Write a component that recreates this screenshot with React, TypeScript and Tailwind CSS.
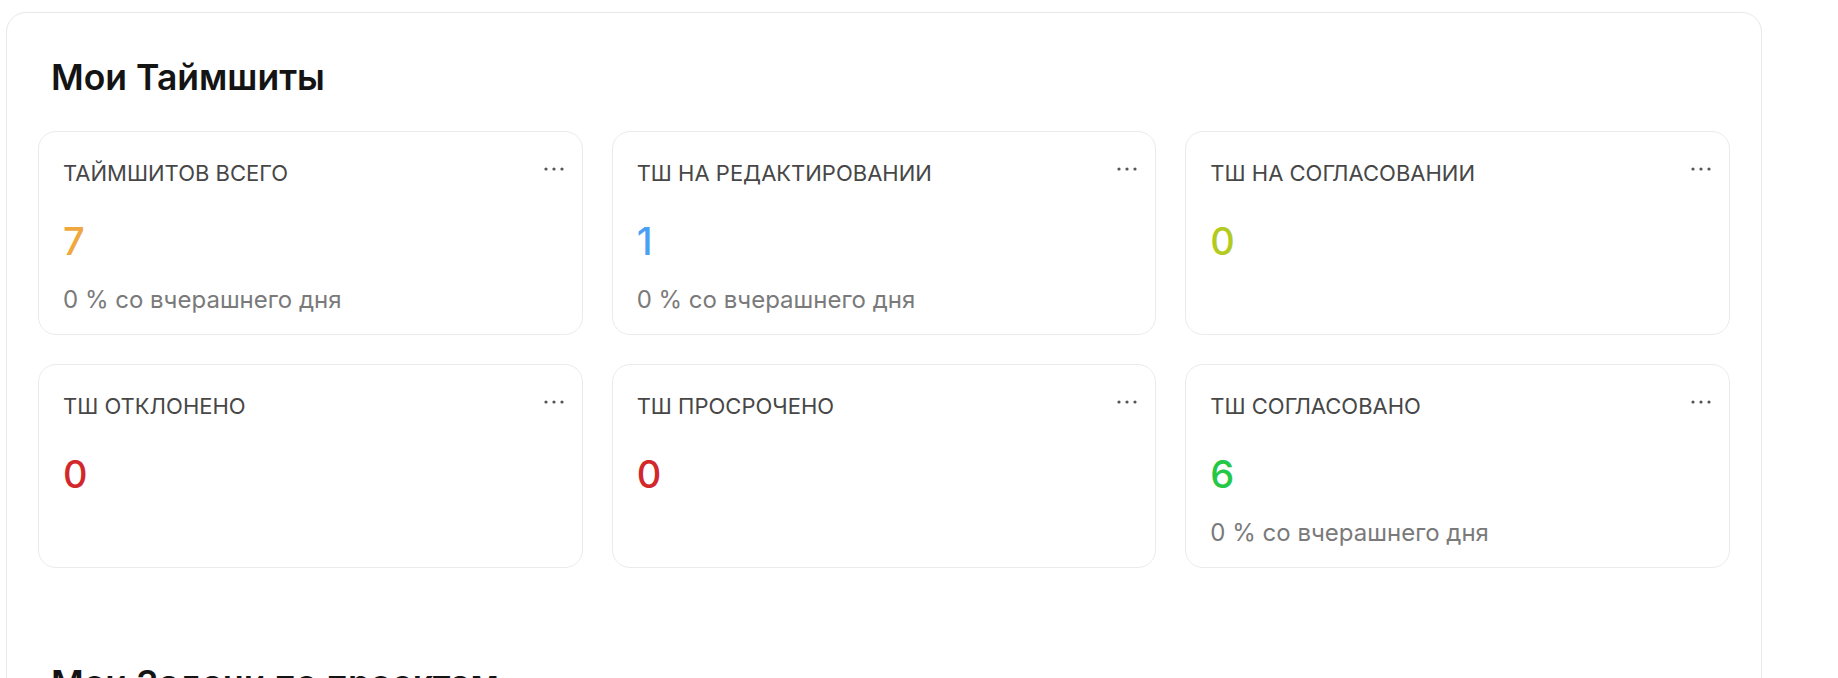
import React from 'react';

type Stat = {
  label: string;
  value: number;
  color: string;
  delta?: string;
};

const stats: Stat[] = [
  { label: 'ТАЙМШИТОВ ВСЕГО', value: 7, color: 'text-[#eea83e]', delta: '0 % со вчерашнего дня' },
  { label: 'ТШ НА РЕДАКТИРОВАНИИ', value: 1, color: 'text-[#4aa0f4]', delta: '0 % со вчерашнего дня' },
  { label: 'ТШ НА СОГЛАСОВАНИИ', value: 0, color: 'text-[#b3cb1f]' },
  { label: 'ТШ ОТКЛОНЕНО', value: 0, color: 'text-[#d2282b]' },
  { label: 'ТШ ПРОСРОЧЕНО', value: 0, color: 'text-[#d2282b]' },
  { label: 'ТШ СОГЛАСОВАНО', value: 6, color: 'text-[#25c846]', delta: '0 % со вчерашнего дня' },
];

const Dots = () => (
  <svg width="20" height="4" viewBox="0 0 20 4" className="mt-[8px] shrink-0 text-[#555]">
    <circle cx="2" cy="2" r="1.6" fill="currentColor" />
    <circle cx="10" cy="2" r="1.6" fill="currentColor" />
    <circle cx="18" cy="2" r="1.6" fill="currentColor" />
  </svg>
);

const StatCard = ({ label, value, color, delta }: Stat) => (
  <div className="h-[204px] rounded-[18px] border border-[#ebebeb] bg-white pl-[24px] pr-[18px] pt-[27px]">
    <div className="flex items-start justify-between">
      <span className="text-[22px] leading-[28px] text-[#474747]">{label}</span>
      <Dots />
    </div>
    <div className={`mt-[31px] text-[38px] font-medium leading-[46px] ${color}`}>{value}</div>
    {delta && <div className="mt-[22px] text-[24px] leading-[28px] text-[#7a7a7a]">{delta}</div>}
  </div>
);

export default function App() {
  return (
    <div
      className="min-h-screen overflow-hidden bg-white pl-[6px] pt-[12px]"
      style={{ fontFamily: 'Inter, "Noto Sans", sans-serif' }}
    >
      <div className="w-[1756px] rounded-[20px] border border-[#e8e8e8] px-[31px] pb-[200px] pt-[44px]">
        <h2 className="pl-[13px] text-[35.5px] font-semibold leading-[42px] text-[#141414]">Мои Таймшиты</h2>
        <div className="mt-[32px] grid grid-cols-3 gap-[29px]">
          {stats.map((s) => (
            <StatCard key={s.label} {...s} />
          ))}
        </div>
        <h2 className="mt-[95px] pl-[13px] text-[35.5px] font-semibold leading-[42px] text-[#141414]">
          Мои Задачи по проектам
        </h2>
      </div>
    </div>
  );
}
